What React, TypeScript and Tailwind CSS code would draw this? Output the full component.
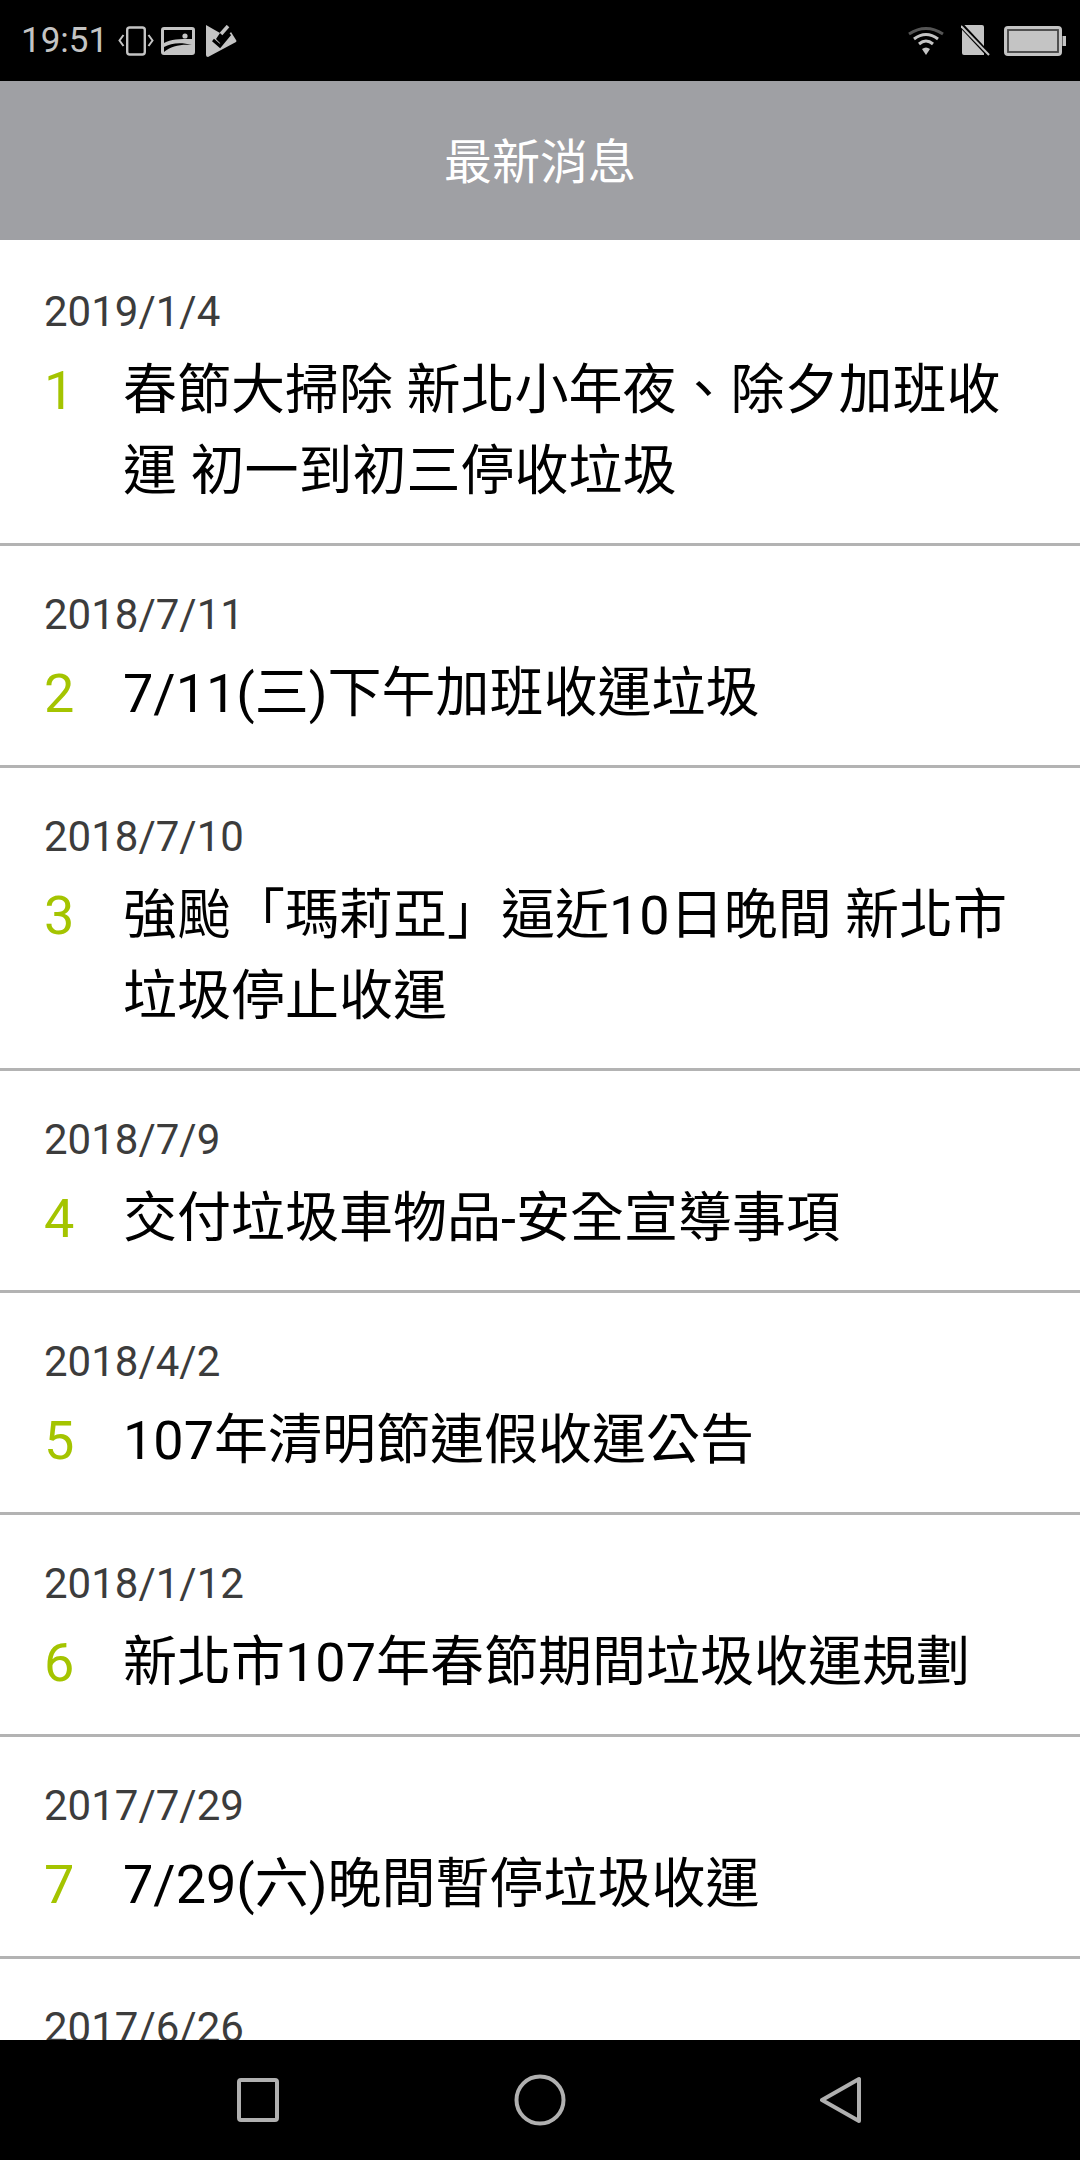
const news = [
  { date: '2019/1/4', title: '春節大掃除 新北小年夜、除夕加班收運 初一到初三停收垃圾' },
  { date: '2018/7/11', title: '7/11(三)下午加班收運垃圾' },
  { date: '2018/7/10', title: '強颱「瑪莉亞」逼近10日晚間 新北市垃圾停止收運' },
  { date: '2018/7/9', title: '交付垃圾車物品-安全宣導事項' },
  { date: '2018/4/2', title: '107年清明節連假收運公告' },
  { date: '2018/1/12', title: '新北市107年春節期間垃圾收運規劃' },
  { date: '2017/7/29', title: '7/29(六)晚間暫停垃圾收運' },
  { date: '2017/6/26', title: '' },
]

function StatusBar() {
  return (
    <div className="flex h-[81px] shrink-0 items-center justify-between bg-black pl-[21px] pr-[14px] text-[#c4c4c4]">
      <div className="flex items-center">
        <span className="w-[97px] text-[35px] leading-none">19:51</span>
        <svg width="36" height="30" viewBox="0 0 36 30" fill="none" stroke="currentColor">
          <rect x="9.2" y="1.5" width="17.6" height="27" rx="2.5" strokeWidth="2.4" />
          <path d="M5.5 9 L1.5 14.5 L5.5 20 M30.5 9 L34.5 14.5 L30.5 20" strokeWidth="2" />
        </svg>
        <svg className="ml-[7px]" width="34" height="28" viewBox="0 0 34 28">
          <path fill="currentColor" fillRule="evenodd" d="M3 0 H31 a3 3 0 0 1 3 3 V25 a3 3 0 0 1 -3 3 H3 a3 3 0 0 1 -3 -3 V3 a3 3 0 0 1 3 -3 Z M3 16 C10 12 18 12 31 12 V3 H3 Z M3 25 C10 19 20 17 31 18 C20 15 10 16 3 20 Z" />
          <circle cx="24" cy="9" r="2.6" fill="currentColor" />
        </svg>
        <svg className="ml-[11px]" width="31" height="32" viewBox="0 0 31 32">
          <path fill="currentColor" d="M0 0 L14 8 L10 14 L15 19 L25 7 L30 15 Q31 16 30 17 L2 32 Q0 32 0 30 Z" />
          <path d="M7 15 L14 21 L24 9" fill="none" stroke="#000" strokeWidth="3" />
          <path d="M15 9 L22 1" fill="none" stroke="currentColor" strokeWidth="3.5" />
        </svg>
      </div>
      <div className="flex items-center">
        <svg width="36" height="30" viewBox="0 0 36 30" fill="none">
          <path d="M1 8 Q18 -3 35 8" stroke="#555" strokeWidth="3" />
          <path d="M6 13 Q18 4 30 13 M11 18 Q18 12 25 18" stroke="currentColor" strokeWidth="3" />
          <path d="M14 23 Q18 20 22 23 L18 29 Z" fill="currentColor" />
        </svg>
        <svg className="ml-[17px]" width="29" height="31" viewBox="0 0 29 31">
          <path fill="currentColor" d="M3 0 H21 a2 2 0 0 1 2 2 V30 H3 a2 2 0 0 1 -2 -2 V2 a2 2 0 0 1 2 -2 Z" />
          <path d="M0 0 L28 30" stroke="#000" strokeWidth="5" />
          <path d="M0 1 L28 30" stroke="currentColor" strokeWidth="2" />
        </svg>
        <svg className="ml-[14px]" width="62" height="30" viewBox="0 0 62 30">
          <rect x="1" y="1" width="56" height="28" rx="3" fill="currentColor" stroke="currentColor" strokeWidth="2" />
          <rect x="4" y="4" width="50" height="22" fill="currentColor" stroke="#444" strokeWidth="1.8" />
          <rect x="58.5" y="10" width="3.5" height="10" fill="currentColor" />
        </svg>
      </div>
    </div>
  )
}

function NavBar() {
  return (
    <div className="flex h-[120px] shrink-0 items-center bg-black pl-[236px] text-[#b0b0b0]">
      <svg width="44" height="44" viewBox="0 0 44 44" fill="none" stroke="currentColor" strokeWidth="4">
        <rect x="3" y="2" width="38" height="40" rx="2" />
      </svg>
      <svg className="ml-[234px]" width="52" height="52" viewBox="0 0 52 52" fill="none" stroke="currentColor" strokeWidth="4">
        <circle cx="26" cy="26" r="23.5" />
      </svg>
      <svg className="ml-[254px]" width="42" height="48" viewBox="0 0 42 48" fill="none" stroke="currentColor" strokeWidth="4" strokeLinejoin="round">
        <path d="M39 3 V45 L2 24 Z" />
      </svg>
    </div>
  )
}

export default function App() {
  return (
    <div className="flex h-[2160px] w-[1080px] flex-col bg-white font-['Roboto','Noto_Sans_CJK_TC',sans-serif]">
      <StatusBar />
      <header className="flex h-[159px] shrink-0 items-center justify-center bg-[#9fa0a4] pt-[5px] text-[48px] text-white">最新消息</header>
      <main className="min-h-0 flex-1 overflow-hidden pt-[3px]">
        {news.map((item, index) => (
          <div key={item.date} className="border-b-[3px] border-[#b3b3b3] pb-[31px] pl-[44px] pr-[66px] pt-[44px]">
            <p className="text-[42px] leading-[50px] text-[#3c3c3c]">{item.date}</p>
            {item.title && (
              <div className="mt-[13px] flex">
                <span className="w-[79px] shrink-0 text-[54px] leading-[81px] text-[#a4c400]">{index + 1}</span>
                <p className="text-[54px] leading-[81px] text-black">{item.title}</p>
              </div>
            )}
          </div>
        ))}
      </main>
      <NavBar />
    </div>
  )
}
